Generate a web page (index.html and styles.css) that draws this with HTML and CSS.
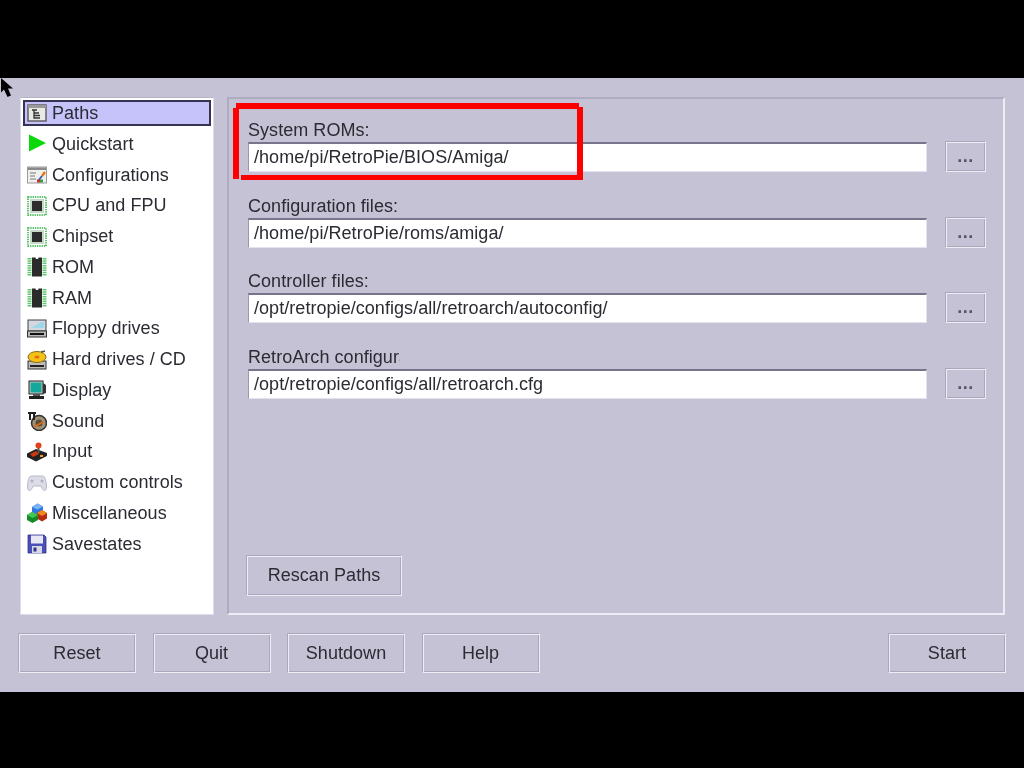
FILE: index.html
```html
<!DOCTYPE html>
<html lang="en">
<head>
<meta charset="utf-8">
<title>Paths</title>
<link rel="stylesheet" href="styles.css">
</head>
<body>
<div class="window">
  <svg class="cursor" viewBox="0 0 14 20" width="14" height="20"><path d="M1 0 L1 14.500 L4 11.500 L7.500 19 L11 17.500 L8 10.500 L13 10.500 Z" fill="#000"/></svg>
  <div class="content">
    <ul class="sidebar">
      <li class="item selected"><svg class="icon" viewBox="0 0 20 20"><rect x="1" y="2" width="18" height="16" fill="#e8e8e4" stroke="#5a5a5a" stroke-width="1.4"/><rect x="1" y="2" width="18" height="3" fill="#9a9a9a"/><path d="M5 7H10M7 7V15H13M7 10H12M7 12.5H13" stroke="#333" stroke-width="1.3" fill="none"/></svg><span>Paths</span></li>
      <li class="item"><svg class="icon" viewBox="0 0 20 20"><path d="M2 0.5 L19 9 L2 17.5 Z" fill="#0bd80b"/></svg><span>Quickstart</span></li>
      <li class="item"><svg class="icon" viewBox="0 0 20 20"><rect x="0.5" y="2" width="19" height="16" fill="#f0f0ec" stroke="#9a9a9a"/><rect x="1" y="2.5" width="18" height="2.5" fill="#8a8a8a"/><path d="M3 8H9M3 11H8M3 14H9" stroke="#777" stroke-width="1.2"/><path d="M11 16L15 11" stroke="#2a5fd0" stroke-width="2"/><path d="M15 11L18 7" stroke="#f07010" stroke-width="2.4"/><rect x="10" y="14.5" width="3" height="3" fill="#d03030"/><rect x="13" y="14.5" width="3" height="3" fill="#30a040"/></svg><span>Configurations</span></li>
      <li class="item"><svg class="icon" viewBox="0 0 20 20"><rect x="1" y="1" width="18" height="18" fill="none" stroke="#5cc46c" stroke-width="2" stroke-dasharray="1.4 0.9"/><rect x="3" y="3" width="14" height="14" fill="#c8d8c8"/><rect x="5" y="5" width="10" height="10" fill="#2c2c2c"/></svg><span>CPU and FPU</span></li>
      <li class="item"><svg class="icon" viewBox="0 0 20 20"><rect x="1" y="1" width="18" height="18" fill="none" stroke="#5cc46c" stroke-width="2" stroke-dasharray="1.4 0.9"/><rect x="3" y="3" width="14" height="14" fill="#c8d8c8"/><rect x="5" y="5" width="10" height="10" fill="#2c2c2c"/></svg><span>Chipset</span></li>
      <li class="item"><svg class="icon" viewBox="0 0 20 20"><path d="M2.5 1V19M17.5 1V19" stroke="#62c872" stroke-width="4" stroke-dasharray="1.5 0.8"/><path d="M5 0.500H8.500C8.500 2.500 11.500 2.500 11.500 0.500H15V19.500H5Z" fill="#2b2b2b"/></svg><span>ROM</span></li>
      <li class="item"><svg class="icon" viewBox="0 0 20 20"><path d="M2.5 1V19M17.5 1V19" stroke="#62c872" stroke-width="4" stroke-dasharray="1.5 0.8"/><path d="M5 0.500H8.500C8.500 2.500 11.500 2.500 11.500 0.500H15V19.500H5Z" fill="#2b2b2b"/></svg><span>RAM</span></li>
      <li class="item"><svg class="icon" viewBox="0 0 20 20"><rect x="1" y="1" width="18" height="11" fill="#d4d8e0" stroke="#444"/><path d="M4 9L14 3H17V9Z" fill="#9ed8e8"/><rect x="0.5" y="12" width="19" height="6" fill="#b8b8b8" stroke="#333"/><rect x="3" y="14" width="14" height="2" fill="#111"/></svg><span>Floppy drives</span></li>
      <li class="item"><svg class="icon" viewBox="0 0 20 20"><rect x="1" y="11" width="18" height="8" fill="#bdbdbd" stroke="#333"/><rect x="3" y="15" width="14" height="2" fill="#222"/><ellipse cx="10" cy="7" rx="9" ry="5.5" fill="#f2c218" stroke="#8a6a10"/><ellipse cx="10" cy="7" rx="2.5" ry="1.5" fill="#e86a10"/><path d="M14 2L18 1" stroke="#555" stroke-width="1.5"/></svg><span>Hard drives / CD</span></li>
      <li class="item"><svg class="icon" viewBox="0 0 20 20"><rect x="2" y="1" width="14" height="13" fill="#c8c8c8" stroke="#222"/><rect x="3.5" y="2.5" width="11" height="10" fill="#13a89a"/><path d="M16 3L19 5V13L16 14Z" fill="#333"/><rect x="6" y="14" width="7" height="2" fill="#555"/><rect x="2" y="16" width="15" height="3" fill="#222"/></svg><span>Display</span></li>
      <li class="item"><svg class="icon" viewBox="0 0 20 20"><circle cx="12" cy="12" r="7.5" fill="#a09078" stroke="#333" stroke-width="1.5"/><circle cx="12" cy="12" r="3.5" fill="#5a4a3a"/><path d="M1 2H9M3 2V9M7 2V9" stroke="#222" stroke-width="2" fill="none"/><path d="M7 16L16 11" stroke="#e06a10" stroke-width="2"/></svg><span>Sound</span></li>
      <li class="item"><svg class="icon" viewBox="0 0 20 20"><path d="M0 11.500L9 7L20 11L20 14L9 19.500L0 15Z" fill="#222"/><path d="M3 12L9 9L12 12L6 15Z" fill="#c83a10"/><rect x="13" y="13" width="3" height="2" fill="#e8a020"/><path d="M11.500 4V11" stroke="#555" stroke-width="2"/><circle cx="11.500" cy="3.500" r="3" fill="#e0401a"/></svg><span>Input</span></li>
      <li class="item"><svg class="icon" viewBox="0 0 20 20"><path d="M4 3H16C18 3 19.5 9 19.5 14C19.5 18 17 18.5 15.5 16L13.5 13H6.5L4.500 16C3 18.500 0.500 18 0.500 14C0.500 9 2 3 4 3Z" fill="#dcdce6" stroke="#b8b8c8"/><circle cx="5" cy="8" r="1.500" fill="#a8b0cc"/><circle cx="15" cy="8" r="1.500" fill="#a8b0cc"/></svg><span>Custom controls</span></li>
      <li class="item"><svg class="icon" viewBox="0 0 20 20"><path d="M5 4L10.500 0.500L16 3.500V9L10.500 12L5 9Z" fill="#2f78e0"/><path d="M5 4L10.500 0.500L16 3.500L10.500 6.500Z" fill="#7ab4f4"/><path d="M10 10L15 7L20 10V15.500L15 18.500L10 15.500Z" fill="#b82a12"/><path d="M10 10L15 7L20 10L15 13Z" fill="#f08a20"/><path d="M0 12L5 9L11 12V17L5.500 20L0 17Z" fill="#158a28"/><path d="M0 12L5 9L11 12L5.500 15Z" fill="#40c850"/></svg><span>Miscellaneous</span></li>
      <li class="item"><svg class="icon" viewBox="0 0 20 20"><path d="M1 1H17L19 3V19H1Z" fill="#4a50b8" stroke="#30348a" stroke-width="0.8"/><rect x="4" y="1.500" width="12" height="8" fill="#e8e8f4"/><rect x="5" y="12" width="10" height="7" fill="#d8d8e4"/><rect x="6.500" y="13.500" width="3" height="4" fill="#30348a"/></svg><span>Savestates</span></li>
    </ul>
    <main class="panel">
      <div class="fields">
        <div class="field">
          <label class="field-label">System ROMs:</label>
          <div class="field-row"><div class="path">/home/pi/RetroPie/BIOS/Amiga/</div><button class="btn btn-browse">...</button></div>
        </div>
        <div class="field">
          <label class="field-label">Configuration files:</label>
          <div class="field-row"><div class="path">/home/pi/RetroPie/roms/amiga/</div><button class="btn btn-browse">...</button></div>
        </div>
        <div class="field">
          <label class="field-label">Controller files:</label>
          <div class="field-row"><div class="path">/opt/retropie/configs/all/retroarch/autoconfig/</div><button class="btn btn-browse">...</button></div>
        </div>
        <div class="field">
          <label class="field-label">RetroArch configuration file:</label>
          <div class="field-row"><div class="path">/opt/retropie/configs/all/retroarch.cfg</div><button class="btn btn-browse">...</button></div>
        </div>
      </div>
      <button class="btn btn-rescan">Rescan Paths</button>
    </main>
  </div>
  <div class="actions">
    <button class="btn btn-action">Reset</button>
    <button class="btn btn-action">Quit</button>
    <button class="btn btn-action">Shutdown</button>
    <button class="btn btn-action">Help</button>
    <button class="btn btn-action btn-start">Start</button>
  </div>
  <div class="highlight">
    <i class="stroke stroke-top"></i>
    <i class="stroke stroke-left"></i>
    <i class="stroke stroke-bottom"></i>
    <i class="stroke stroke-right"></i>
  </div>
</div>
</body>
</html>
```
FILE: styles.css
```css
* { box-sizing: border-box; }
html, body { margin: 0; height: 100%; background: #000; overflow: hidden; }
body { padding-top: 78px; font-family: "Liberation Sans", Arial, sans-serif; font-size: 18px; letter-spacing: 0.05px; color: #2b2b33; }

.window {
  position: relative;
  width: 1024px;
  height: 614px;
  background: #c5c2d6;
  padding: 19px 18px 0 18px;
}
.cursor { position: absolute; left: 0; top: 0; }

.content { display: flex; height: 518px; margin-left: 2px; gap: 13px; }

.sidebar {
  width: 194px;
  margin: 0;
  padding: 2px;
  list-style: none;
  background: #fff;
  border: 1px solid #dddcea;
  border-top-color: #b5b3c8;
  flex: none;
}
.item {
  display: flex;
  align-items: center;
  gap: 5px;
  height: 30.75px;
  padding-left: 4px;
  white-space: nowrap;
}
.item.selected {
  height: 26px;
  margin-bottom: 3px;
  background: #c6c3fb;
  border: 2px solid #35334f;
  padding-left: 2px;
}
.item span { filter: blur(0.4px); }
.icon { width: 20px; height: 20px; flex: none; filter: blur(0.3px); }

.panel {
  flex: 1;
  margin-right: 1px;
  padding: 21px 17px 17px 19px;
  border: 2px solid #eeedf6;
  border-top-color: #aeacc0;
  border-left-color: #aeacc0;
  display: flex;
  flex-direction: column;
  justify-content: space-between;
  align-items: flex-start;
}
.fields { display: flex; flex-direction: column; gap: 23.500px; width: 100%; }
.field-label {
  display: block;
  width: 152px;
  height: 22px;
  line-height: 21px;
  overflow: hidden;
  white-space: nowrap;
  filter: blur(0.4px);
}
.field-row { display: flex; gap: 18px; align-items: flex-start; }
.path {
  flex: 1;
  height: 30px;
  line-height: 27px;
  padding-left: 5px;
  background: #fff;
  border-top: 2px solid #77758c;
  border-left: 1px solid #9a98ae;
  border-right: 1px solid #e3e2ee;
  border-bottom: 1px solid #e3e2ee;
  filter: blur(0.3px);
}

.btn {
  font: inherit;
  letter-spacing: inherit;
  color: inherit;
  background: #c5c2d6;
  border: 1px solid;
  border-color: #aaa8bd #eeedf6 #eeedf6 #aaa8bd;
  box-shadow: inset 1px 1px 0 #eeedf6, inset -1px -1px 0 #aaa8bd;
  padding: 0;
  filter: blur(0.3px);
}
.btn-browse { width: 41px; height: 31px; flex: none; margin-top: -1px; letter-spacing: 0.5px; font-weight: 700; color: #55546a; }
.btn-rescan { width: 156px; height: 41px; margin-left: -2px; }
.actions { display: flex; gap: 16.500px; margin-top: 18px; }
.btn-action { width: 118px; height: 40px; }
.btn-start { margin-left: auto; }

.highlight {
  position: absolute;
  left: 233px;
  top: 25px;
  width: 350px;
  height: 77px;
  pointer-events: none;
}
.stroke { position: absolute; background: #f00; }
.stroke-top { left: 3px; right: 4px; top: 0; height: 6px; }
.stroke-left { left: 0; top: 5px; width: 6px; height: 71px; }
.stroke-bottom { left: 8px; right: 0; bottom: 0; height: 5px; }
.stroke-right { right: 0; top: 4px; width: 6px; height: 73px; }
```
